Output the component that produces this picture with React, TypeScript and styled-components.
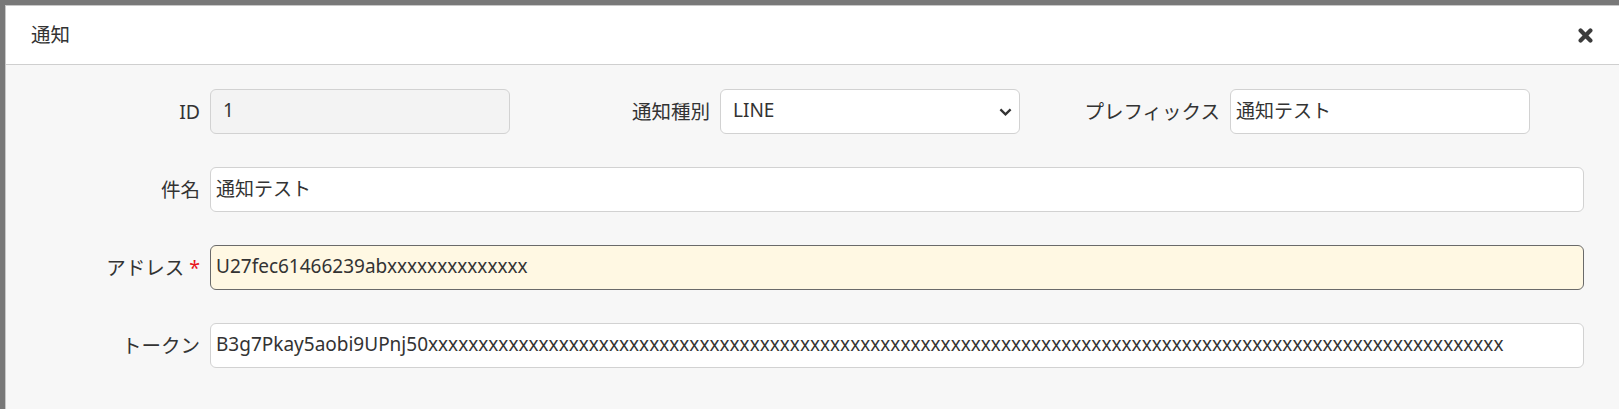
import React, { useEffect, useRef } from "react";
import styled, { createGlobalStyle } from "styled-components";

const GlobalStyle = createGlobalStyle`
  html, body {
    margin: 0;
    padding: 0;
    background: #787878;
  }
  body {
    font-family: "Noto Sans", "Noto Sans CJK JP", sans-serif;
    color: #333;
    overflow: hidden;
  }
  * { box-sizing: border-box; }
`;

const Backdrop = styled.div`
  height: 409px;
  padding: 5px 0 0 5px;
  background: #787878;
`;

const Modal = styled.div`
  height: 100%;
  display: flex;
  flex-direction: column;
  background: #f7f7f7;
  border-top: 1px solid #c8c8c8;
  border-left: 1px solid #c8c8c8;
`;

const Header = styled.div`
  flex: 0 0 auto;
  height: 59px;
  display: flex;
  align-items: center;
  justify-content: space-between;
  padding: 0 26px 0 25px;
  background: #fff;
  border-bottom: 1px solid #cfcfcf;
`;

const Title = styled.h4`
  margin: 0;
  font-size: 19.5px;
  font-weight: 400;
  line-height: 1;
  color: #333;
`;

const CloseButton = styled.button`
  display: flex;
  align-items: center;
  justify-content: center;
  width: 15px;
  height: 15px;
  padding: 0;
  margin-top: 1px;
  border: none;
  background: none;
  color: #3c3c3c;
  cursor: pointer;
`;

const Body = styled.div`
  display: flex;
  flex-direction: column;
  gap: 33px;
  padding: 24px 35px 0 0;
`;

const TopRow = styled.div`
  display: flex;
  gap: 6px;
`;

const Group = styled.div`
  display: grid;
  grid-template-columns: 194px 300px;
  column-gap: 10px;
  align-items: center;
`;

const FullRow = styled.div`
  display: grid;
  grid-template-columns: 194px 1fr;
  column-gap: 10px;
  align-items: center;
`;

const Label = styled.label`
  text-align: right;
  font-size: 19.5px;
  line-height: 1.2;
  color: #333;
  white-space: nowrap;
`;

const Required = styled.span`
  margin-left: 5px;
  color: #e8141b;
`;

const TextInput = styled.input<{ $tone?: "plain" | "readonly" | "active" }>`
  display: block;
  width: 100%;
  height: 45px;
  margin: 0;
  padding: 0 ${(p) => (p.$tone === "readonly" ? "12px" : "5px")} 3px;
  font-family: "Noto Sans", "Noto Sans CJK JP", sans-serif;
  font-size: 19px;
  color: #333;
  caret-color: #222;
  border-radius: 6px;
  outline: none;
  border: 1px solid
    ${(p) => (p.$tone === "active" ? "#6a6a6a" : "#d2d2d2")};
  background: ${(p) =>
    p.$tone === "readonly"
      ? "#f3f3f3"
      : p.$tone === "active"
      ? "#fff8e3"
      : "#fff"};
`;

const SelectWrap = styled.div`
  position: relative;
  width: 100%;
  height: 45px;
`;

const Select = styled.select`
  display: block;
  width: 100%;
  height: 45px;
  margin: 0;
  padding: 0 30px 3px 12px;
  font-family: "Noto Sans", "Noto Sans CJK JP", sans-serif;
  font-size: 19px;
  color: #333;
  background: #fff;
  border: 1px solid #d2d2d2;
  border-radius: 6px;
  appearance: none;
  -webkit-appearance: none;
  outline: none;
`;

const Chevron = styled.svg`
  position: absolute;
  right: 8px;
  top: 19px;
  pointer-events: none;
`;

const ADDRESS = "U27fec61466239ab" + "x".repeat(14);
const TOKEN = "B3g7Pkay5aobi9UPnj50" + "x".repeat(107);

export default function App() {
  const addrRef = useRef<HTMLInputElement>(null);

  useEffect(() => {
    const el = addrRef.current;
    if (el) {
      el.focus();
      el.setSelectionRange(ADDRESS.length, ADDRESS.length);
    }
  }, []);

  return (
    <>
      <GlobalStyle />
      <Backdrop>
        <Modal>
          <Header>
            <Title>通知</Title>
            <CloseButton aria-label="閉じる">
              <svg width="15" height="15" viewBox="0 0 15 15">
                <path
                  d="M2.6 2.6 L12.4 12.4 M12.4 2.6 L2.6 12.4"
                  stroke="currentColor"
                  strokeWidth="4.2"
                  strokeLinecap="round"
                  fill="none"
                />
              </svg>
            </CloseButton>
          </Header>
          <Body>
            <TopRow>
              <Group>
                <Label>ID</Label>
                <TextInput $tone="readonly" readOnly defaultValue="1" />
              </Group>
              <Group>
                <Label>通知種別</Label>
                <SelectWrap>
                  <Select defaultValue="LINE">
                    <option value="LINE">LINE</option>
                    <option value="MAIL">MAIL</option>
                  </Select>
                  <Chevron width="13" height="8" viewBox="0 0 13 8">
                    <polyline
                      points="1.4,1.4 6.5,6.4 11.6,1.4"
                      fill="none"
                      stroke="#333"
                      strokeWidth="2.3"
                    />
                  </Chevron>
                </SelectWrap>
              </Group>
              <Group>
                <Label>プレフィックス</Label>
                <TextInput $tone="plain" defaultValue="通知テスト" />
              </Group>
            </TopRow>
            <FullRow>
              <Label>件名</Label>
              <TextInput $tone="plain" defaultValue="通知テスト" />
            </FullRow>
            <FullRow>
              <Label>
                アドレス<Required>*</Required>
              </Label>
              <TextInput ref={addrRef} $tone="active" defaultValue={ADDRESS} />
            </FullRow>
            <FullRow>
              <Label>トークン</Label>
              <TextInput $tone="plain" defaultValue={TOKEN} />
            </FullRow>
          </Body>
        </Modal>
      </Backdrop>
    </>
  );
}
